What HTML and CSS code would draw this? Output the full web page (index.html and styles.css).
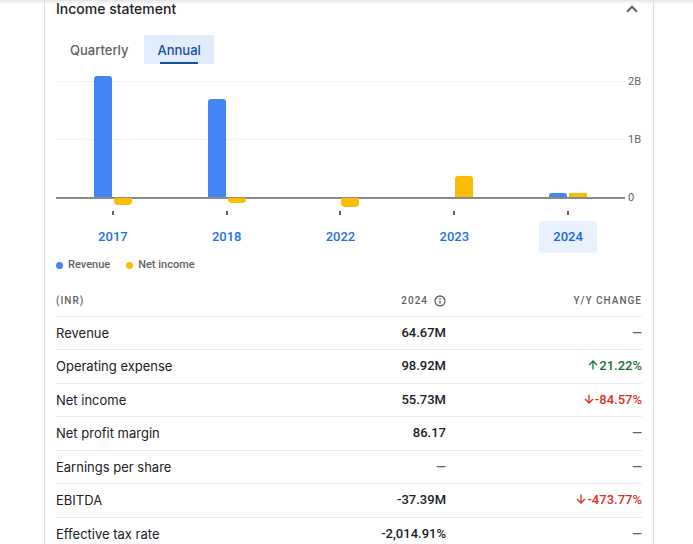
FILE: index.html
```html
<!DOCTYPE html>
<html lang="en">
<head>
<meta charset="utf-8">
<title>Income statement</title>
<link rel="stylesheet" href="styles.css">
</head>
<body>
<div class="top-shadow"></div>
<main class="panel">
  <header class="panel-head">
    <h2>Income statement</h2>
    <button class="collapse" aria-label="Collapse"><svg viewBox="0 0 12 8" width="12" height="8"><path d="M1 6.7 6 1.7 11 6.7"/></svg></button>
  </header>
  <div class="tabs" role="tablist">
    <button class="tab" role="tab">Quarterly</button>
    <button class="tab selected" role="tab" aria-selected="true">Annual</button>
  </div>
  <section class="chart">
    <div class="scale"><span class="line"></span><span class="value">2B</span></div>
    <div class="scale"><span class="line"></span><span class="value">1B</span></div>
    <div class="scale base"><span class="line axis"></span><span class="value">0</span></div>
    <div class="bars">
      <div class="group"><i class="bar revenue" style="height:121px"></i><i class="bar income loss" style="height:7px"></i></div>
      <div class="group"><i class="bar revenue" style="height:98px"></i><i class="bar income loss" style="height:5px"></i></div>
      <div class="group"><i class="bar revenue" style="height:0"></i><i class="bar income loss" style="height:9px"></i></div>
      <div class="group"><i class="bar revenue" style="height:0"></i><i class="bar income" style="height:21px"></i></div>
      <div class="group"><i class="bar revenue" style="height:4px"></i><i class="bar income low" style="height:4px"></i></div>
    </div>
  </section>
  <div class="years">
    <div class="year"><button>2017</button></div>
    <div class="year"><button>2018</button></div>
    <div class="year"><button>2022</button></div>
    <div class="year"><button>2023</button></div>
    <div class="year"><button class="selected">2024</button></div>
  </div>
  <div class="legend">
    <span class="key revenue-key">Revenue</span>
    <span class="key income-key">Net income</span>
  </div>
  <table>
    <thead>
      <tr><th>(INR)</th><th><span class="with-icon">2024 <svg class="info" viewBox="0 0 12 12" width="12" height="12"><circle cx="6" cy="6" r="5"/><path d="M6 5.3v3.4M6 3.1v1.2"/></svg></span></th><th>Y/Y CHANGE</th></tr>
    </thead>
    <tbody>
      <tr><td>Revenue</td><td>64.67M</td><td class="none">—</td></tr>
      <tr><td>Operating expense</td><td>98.92M</td><td class="up"><svg class="arrow" viewBox="0 0 10 10" width="10" height="10"><path d="M5 9.5V1M1 5l4-4 4 4"/></svg>21.22%</td></tr>
      <tr><td>Net income</td><td>55.73M</td><td class="down"><svg class="arrow" viewBox="0 0 10 10" width="10" height="10"><path d="M5 .5V9M1 5l4 4 4-4"/></svg>-84.57%</td></tr>
      <tr><td>Net profit margin</td><td>86.17</td><td class="none">—</td></tr>
      <tr><td>Earnings per share</td><td class="none">—</td><td class="none">—</td></tr>
      <tr><td>EBITDA</td><td>-37.39M</td><td class="down"><svg class="arrow" viewBox="0 0 10 10" width="10" height="10"><path d="M5 .5V9M1 5l4 4 4-4"/></svg>-473.77%</td></tr>
      <tr><td>Effective tax rate</td><td>-2,014.91%</td><td class="none">—</td></tr>
    </tbody>
  </table>
</main>
</body>
</html>
```
FILE: styles.css
```css
* { box-sizing: border-box; }
html { height: 100%; overflow: hidden; }
body {
  margin: 0;
  height: 100%;
  overflow: hidden;
  background: #fff;
  color: #202124;
  font: 500 13px/16px Inter, Roboto, sans-serif;
}
button {
  border: 0;
  padding: 0;
  background: none;
  color: inherit;
  font: inherit;
}
.top-shadow {
  position: fixed;
  top: 0;
  left: 0;
  right: 0;
  height: 4px;
  background: linear-gradient(#e4e4e4, rgba(255, 255, 255, 0));
}
.panel {
  margin: 0 39px 0 44px;
  padding: 0 11px;
  min-height: 100%;
  border: 1px solid #dadce0;
  border-width: 0 1px;
}
.panel-head {
  display: flex;
  justify-content: space-between;
  height: 35px;
}
h2 { margin: 0; font: 500 14px/18px Inter, sans-serif; }
.collapse { width: 20px; height: 18px; }
.collapse svg { display: block; margin: 0 auto; }
svg { fill: none; stroke: #5f6368; stroke-width: 2; }
.tabs { display: flex; gap: 2px; }
.tab {
  height: 29px;
  padding: 0 14px;
  color: #5f6368;
}
.tab.selected {
  position: relative;
  padding: 0 13px;
  background: #e1edfc;
  color: #174ea6;
}
.tab.selected::after {
  content: "";
  position: absolute;
  left: 16px;
  right: 16px;
  bottom: 0;
  height: 2px;
  background: #174ea6;
}
.chart { position: relative; padding-top: 17px; }
.scale { display: flex; height: 58px; }
.scale.base { height: 14px; }
.line { flex: 1; border-top: 1px solid #f1f3f4; }
.axis { border-top: 2px solid #8b898c; }
.value {
  width: 17px;
  margin-top: -7px;
  padding-left: 3px;
  color: #5f6368;
  font: 400 11px/16px Roboto, sans-serif;
}
.bars {
  position: absolute;
  top: 0;
  left: 0;
  right: 17px;
  height: 133px;
  display: flex;
}
.group {
  flex: 1;
  display: flex;
  justify-content: center;
  align-items: flex-end;
  gap: 2px;
}
.bar { width: 18px; border-radius: 3px 3px 0 0; }
.revenue { background: #4285f4; }
.income { background: #fbbc04; }
.low { border-radius: 0; }
.loss { align-self: flex-start; margin-top: 134px; border-radius: 0 0 4px 4px; }
.years { display: flex; margin-right: 17px; }
.year {
  flex: 1;
  display: flex;
  flex-direction: column;
  align-items: center;
  gap: 6px;
}
.year::before { content: ""; width: 2px; height: 4px; background: #5f6368; }
.year button {
  width: 58px;
  height: 32px;
  border-radius: 4px;
  color: #1a73e8;
  font-family: Roboto, sans-serif;
}
.year .selected { background: #e8f0fe; color: #1967d2; }
.legend {
  display: flex;
  gap: 16px;
  padding-top: 4px;
  color: #5f6368;
  font: 500 11px/16px Roboto, sans-serif;
}
.key { display: flex; align-items: center; gap: 5px; }
.key::before { content: ""; width: 7px; height: 7px; border-radius: 50%; background: #4285f4; }
.income-key::before { background: #fbbc04; }
table {
  width: 100%;
  margin-top: 12px;
  border-collapse: separate;
  border-spacing: 0;
  table-layout: fixed;
}
th, td { padding: 0; text-align: right; border-bottom: 1px solid #e8eaed; }
th:first-child, td:first-child { width: 45%; text-align: left; }
th:last-child { width: 196px; }
th {
  height: 32px;
  color: #5f6368;
  font: 500 10px/16px Roboto, sans-serif;
  letter-spacing: 1px;
}
.with-icon { display: inline-flex; align-items: center; gap: 6px; }
.info { stroke-width: 1.3; }
td { height: 33px; padding-bottom: 1px; font-family: Roboto, sans-serif; }
td:first-child { font-family: Inter, sans-serif; font-weight: 400; }
tr:nth-child(even) td { height: 34px; }
.none { color: #5f6368; }
.up { color: #137333; }
.down { color: #d93025; }
.arrow { margin-right: 1px; stroke: currentColor; stroke-width: 1.3; }
```
